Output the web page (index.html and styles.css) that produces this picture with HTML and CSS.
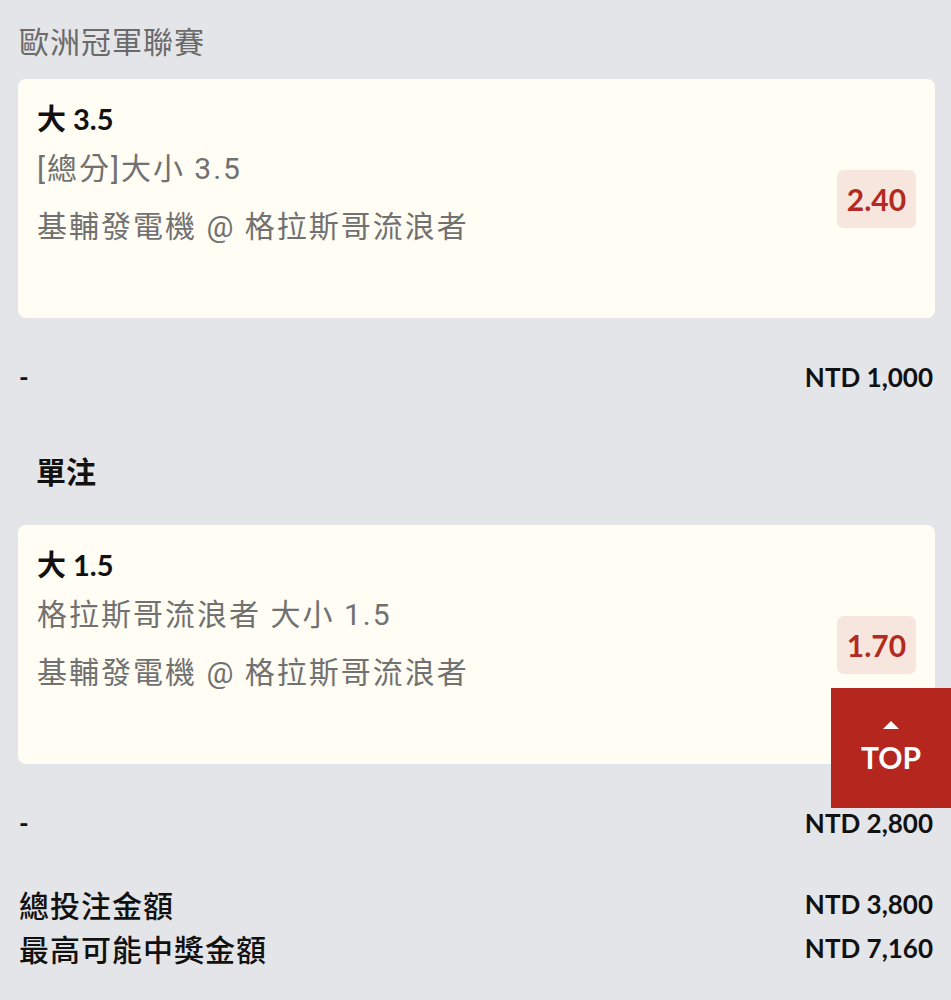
FILE: index.html
```html
<!DOCTYPE html>
<html lang="zh-Hant">
<head>
    <meta charset="UTF-8">
    <meta name="viewport" content="width=device-width, initial-scale=1.0">
    <title>投注單</title>
    <link rel="stylesheet" href="styles.css">
</head>
<body>
    <div class="league">歐洲冠軍聯賽</div>

    <div class="bet-card">
        <div class="bet-info">
            <div class="bet-title">大 3.5</div>
            <div class="bet-market">[總分]大小 3.5</div>
            <div class="bet-match">基輔發電機 @ 格拉斯哥流浪者</div>
        </div>
        <div class="odds">2.40</div>
    </div>

    <div class="stake-row">
        <span>-</span>
        <span>NTD 1,000</span>
    </div>

    <div class="section-title">單注</div>

    <div class="bet-card">
        <div class="bet-info">
            <div class="bet-title">大 1.5</div>
            <div class="bet-market">格拉斯哥流浪者 大小 1.5</div>
            <div class="bet-match">基輔發電機 @ 格拉斯哥流浪者</div>
        </div>
        <div class="odds">1.70</div>
    </div>

    <div class="stake-row">
        <span>-</span>
        <span>NTD 2,800</span>
    </div>

    <div class="summary">
        <div class="summary-row">
            <span class="summary-label">總投注金額</span>
            <span>NTD 3,800</span>
        </div>
        <div class="summary-row">
            <span class="summary-label">最高可能中獎金額</span>
            <span>NTD 7,160</span>
        </div>
    </div>

    <a class="top-btn" href="#">
        <span class="top-arrow"></span>
        <span>TOP</span>
    </a>
</body>
</html>
```

FILE: styles.css
```css
body {
    margin: 0;
    background-color: #e4e5e8;
    font-family: Lato, "Noto Sans CJK TC", sans-serif;
    color: #111;
}
.league {
    height: 79px;
    padding-left: 19px;
    line-height: 80px;
    font-size: 30px;
    letter-spacing: 1px;
    color: #6a6a6a;
    font-family: "Noto Sans CJK TC", sans-serif;
}
.bet-card {
    display: flex;
    align-items: center;
    justify-content: space-between;
    height: 239px;
    margin: 0 16px 0 18px;
    padding: 0 19px;
    box-sizing: border-box;
    background-color: #fffdf4;
    border-radius: 8px;
}
.bet-info {
    align-self: flex-start;
    padding-top: 20px;
}
.bet-title {
    height: 40px;
    line-height: 40px;
    font-size: 29px;
    font-weight: bold;
}
.bet-market, .bet-match {
    font-family: Roboto, "Noto Sans CJK TC", sans-serif;
    font-size: 30px;
    letter-spacing: 2px;
    color: #717171;
}
.bet-market {
    margin-top: 10px;
    height: 40px;
    line-height: 40px;
}
.bet-match {
    margin-top: 18px;
    height: 40px;
    line-height: 40px;
}
.odds {
    width: 79px;
    height: 58px;
    line-height: 58px;
    text-align: center;
    font-size: 30px;
    font-weight: bold;
    color: #b32a22;
    background-color: #f7e6dd;
    border-radius: 7px;
}
.stake-row {
    display: flex;
    justify-content: space-between;
    align-items: center;
    height: 118px;
    padding: 0 18px 0 19px;
    font-size: 26px;
    font-weight: bold;
}
.section-title {
    height: 89px;
    line-height: 70px;
    padding-left: 36px;
    font-size: 30px;
    font-weight: bold;
}
.summary {
    padding: 0 18px 0 19px;
}
.summary-row {
    display: flex;
    justify-content: space-between;
    align-items: center;
    height: 44px;
    font-size: 26px;
    font-weight: bold;
}
.summary-label {
    font-size: 30px;
    letter-spacing: 1px;
    font-weight: 500;
    font-family: "Noto Sans CJK TC", sans-serif;
}
.top-btn {
    position: fixed;
    right: 0;
    top: 688px;
    width: 120px;
    height: 120px;
    display: flex;
    flex-direction: column;
    align-items: center;
    justify-content: center;
    background-color: #b5261e;
    color: #fff;
    text-decoration: none;
    font-size: 30px;
    font-weight: bold;
}
.top-arrow {
    width: 0;
    height: 0;
    border-left: 8px solid transparent;
    border-right: 8px solid transparent;
    border-bottom: 8px solid #fff;
    margin: 0 0 10px;
}
```
